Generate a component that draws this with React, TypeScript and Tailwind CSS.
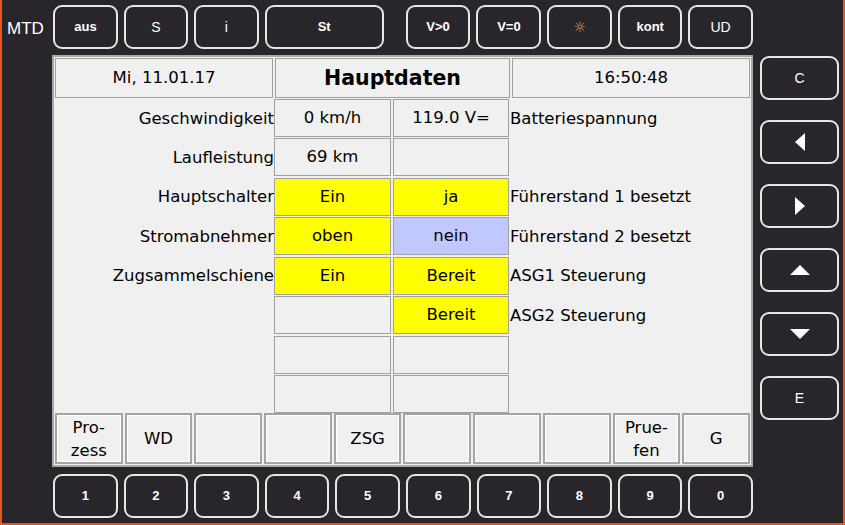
import React from "react";

const btn =
  "flex items-center justify-center h-[44px] rounded-[9px] border-2 border-[#e6e6e6] text-white text-[13px] font-bold font-['Liberation_Sans',Arial,sans-serif]";

function TopBar() {
  return (
    <div className="flex h-[44px] pl-px">
      <div className={`${btn} w-[65px]`}>aus</div>
      <div className={`${btn} w-[64px] ml-[6px] font-normal text-[14px]`}>S</div>
      <div className={`${btn} w-[65px] ml-[6px] font-normal text-[14px]`}>i</div>
      <div className={`${btn} w-[119px] ml-[6px]`}>St</div>
      <div className={`${btn} w-[65px] ml-[22px]`}>V&gt;0</div>
      <div className={`${btn} w-[65px] ml-[6px]`}>V=0</div>
      <div className={`${btn} w-[65px] ml-[6px]`}>
        <span className="text-[14px] font-normal text-[#d8a878] font-['DejaVu_Sans',sans-serif]">☼</span>
      </div>
      <div className={`${btn} w-[64px] ml-[6px]`}>kont</div>
      <div className={`${btn} w-[65px] ml-[6px] font-normal text-[14px]`}>UD</div>
    </div>
  );
}

function BottomBar() {
  const nums = ["1", "2", "3", "4", "5", "6", "7", "8", "9", "0"];
  return (
    <div className="flex h-[44px] pl-px gap-[6px]">
      {nums.map((n) => (
        <div key={n} className={`${btn} w-[65px]`}>
          {n}
        </div>
      ))}
    </div>
  );
}

type CellKind = "none" | "empty" | "yellow" | "blue";

const cellBase =
  "h-[38px] flex items-center justify-center border border-[#a0a0a0] pt-px";

function Cell({ kind, text, w }: { kind: CellKind; text?: string; w: string }) {
  if (kind === "none") return <div className={`${w} h-[38px]`} />;
  const bg =
    kind === "yellow" ? "bg-[#ffff00]" : kind === "blue" ? "bg-[#c0c8ff]" : "bg-[#f0f0f0]";
  return <div className={`${cellBase} ${w} ${bg}`}>{text}</div>;
}

const rows: {
  left: string;
  a: CellKind;
  at?: string;
  b: CellKind;
  bt?: string;
  right: string;
}[] = [
  { left: "Geschwindigkeit", a: "empty", at: "0 km/h", b: "empty", bt: "119.0 V=", right: "Batteriespannung" },
  { left: "Laufleistung", a: "empty", at: "69 km", b: "empty", right: "" },
  { left: "Hauptschalter", a: "yellow", at: "Ein", b: "yellow", bt: "ja", right: "Führerstand 1 besetzt" },
  { left: "Stromabnehmer", a: "yellow", at: "oben", b: "blue", bt: "nein", right: "Führerstand 2 besetzt" },
  { left: "Zugsammelschiene", a: "yellow", at: "Ein", b: "yellow", bt: "Bereit", right: "ASG1 Steuerung" },
  { left: "", a: "empty", b: "yellow", bt: "Bereit", right: "ASG2 Steuerung" },
  { left: "", a: "empty", b: "empty", right: "" },
  { left: "", a: "empty", b: "empty", right: "" },
];

const softkeys = ["Pro-\nzess", "WD", "", "", "ZSG", "", "", "", "Prue-\nfen", "G"];

function Panel() {
  return (
    <div className="w-[701px] h-[412px] bg-[#f0f0f0] border-2 border-[#a8a8a8] p-px flex flex-col text-[16.5px] text-black font-['DejaVu_Sans',Verdana,sans-serif]">
      <div className="flex h-[40px] gap-[2px]">
        <div className="w-[218px] border border-[#a0a0a0] flex items-center justify-center">
          Mi, 11.01.17
        </div>
        <div className="w-[235px] border border-[#a0a0a0] flex items-center justify-center font-bold text-[20.5px]">
          Hauptdaten
        </div>
        <div className="flex-1 border border-[#a0a0a0] flex items-center justify-center">
          16:50:48
        </div>
      </div>
      <div className="flex flex-col justify-between h-[315px] mt-px">
        {rows.map((r, i) => (
          <div key={i} className="flex h-[38px] items-center">
            <div className="w-[219px] text-right whitespace-nowrap pt-[2px]">{r.left}</div>
            <Cell kind={r.a} text={r.at} w="w-[117px]" />
            <div className="w-[2px]" />
            <Cell kind={r.b} text={r.bt} w="w-[116px]" />
            <div className="pl-[1px] whitespace-nowrap pt-[2px]">{r.right}</div>
          </div>
        ))}
      </div>
      <div className="grid grid-cols-10 gap-[2px] h-[51px] mt-auto">
        {softkeys.map((s, i) => (
          <div
            key={i}
            className="border-2 border-[#a4a4a4] shadow-[inset_1px_1px_0_#ffffff,inset_-1px_-1px_0_#ffffff] flex items-center justify-center text-center leading-[23px] whitespace-pre"
          >
            {s}
          </div>
        ))}
      </div>
    </div>
  );
}

function Tri({ dir }: { dir: "l" | "r" | "u" | "d" }) {
  const pts =
    dir === "l"
      ? "10,0 10,18 0,9"
      : dir === "r"
      ? "0,0 0,18 10,9"
      : dir === "u"
      ? "0,10 20,10 10,0"
      : "0,0 20,0 10,10";
  const w = dir === "l" || dir === "r" ? 10 : 20;
  const h = dir === "l" || dir === "r" ? 18 : 10;
  return (
    <svg width={w} height={h} viewBox={`0 0 ${w} ${h}`}>
      <polygon points={pts} fill="#ffffff" />
    </svg>
  );
}

function RightBar() {
  const rb =
    "flex items-center justify-center w-[79px] h-[44px] rounded-[9px] border-2 border-[#e6e6e6] text-white text-[14px] font-['Liberation_Sans',Arial,sans-serif]";
  return (
    <div className="flex flex-col gap-[20px] pt-[56px]">
      <div className={rb}>C</div>
      <div className={rb}>
        <Tri dir="l" />
      </div>
      <div className={rb}>
        <Tri dir="r" />
      </div>
      <div className={rb}>
        <Tri dir="u" />
      </div>
      <div className={rb}>
        <Tri dir="d" />
      </div>
      <div className={rb}>E</div>
    </div>
  );
}

export default function App() {
  return (
    <div className="w-[845px] h-[525px] bg-[#28262a] border-l-2 border-r-2 border-b-2 border-[#e8561c] flex overflow-hidden">
      <div className="w-[50px] pt-[7px]">
        <div className="h-[44px] flex items-center pl-[5px] text-white text-[17px] font-['Liberation_Sans',Arial,sans-serif]">
          MTD
        </div>
      </div>
      <div className="flex flex-col w-[701px] pt-[5px]">
        <TopBar />
        <div className="h-[6px]" />
        <Panel />
        <div className="h-[7px]" />
        <BottomBar />
      </div>
      <div className="w-[7px]" />
      <RightBar />
    </div>
  );
}
